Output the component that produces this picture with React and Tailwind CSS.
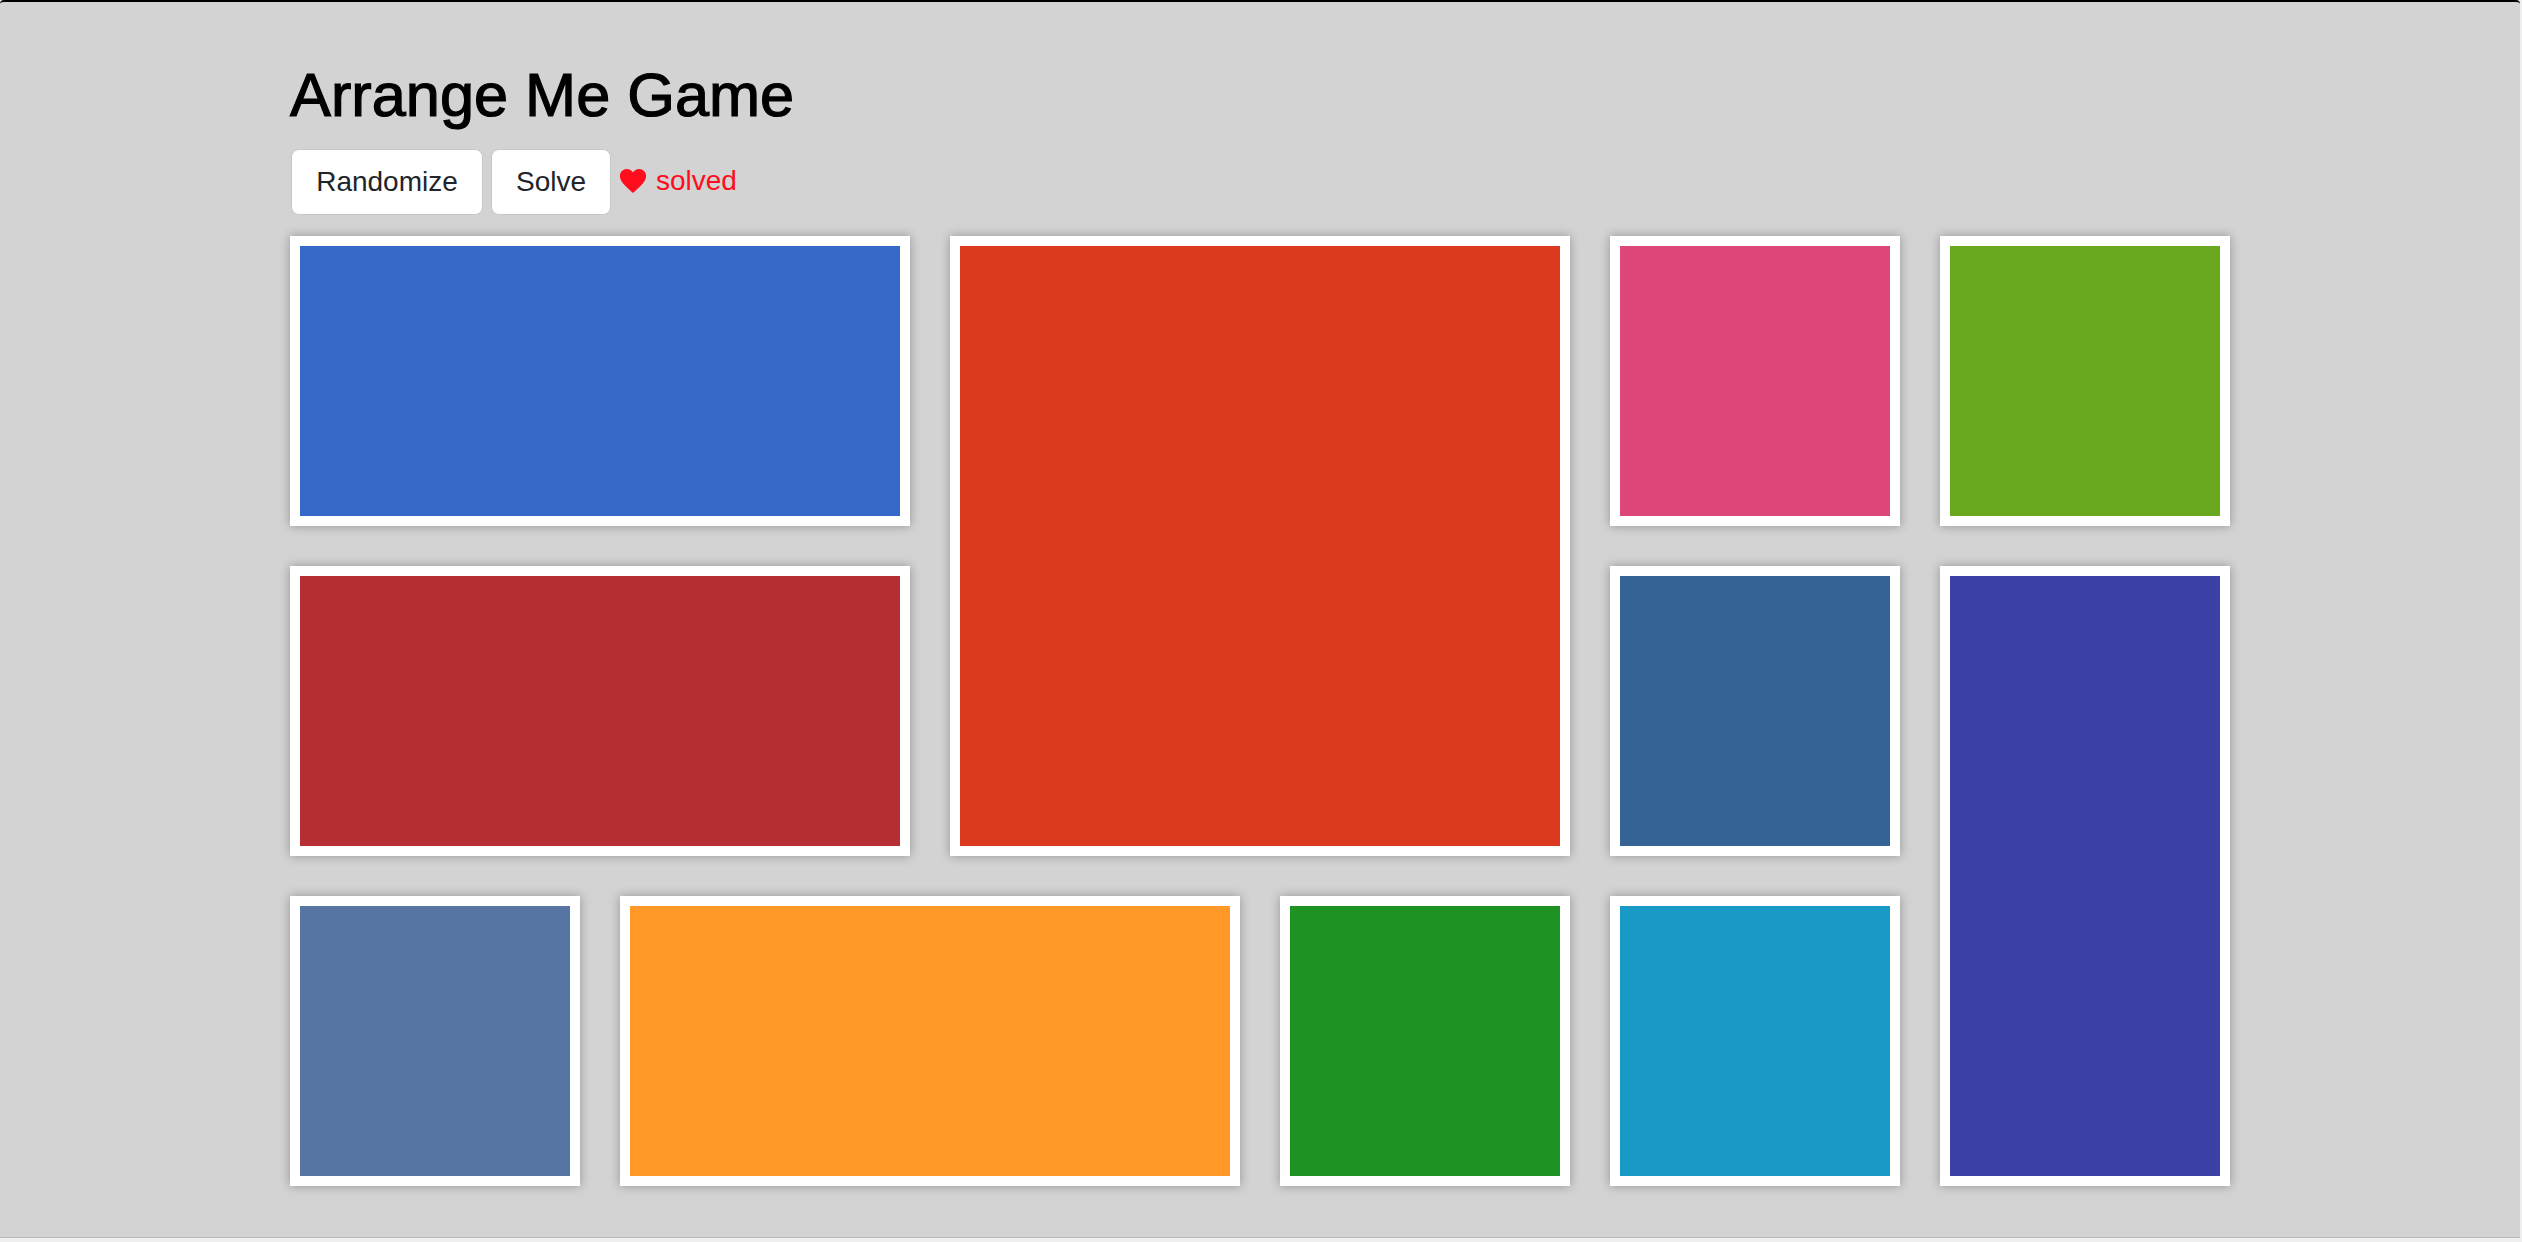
const tiles = [
  { color: 'bg-[#3669c9]', span: 'col-span-2' },
  { color: 'bg-[#dc3a1f]', span: 'col-span-2 row-span-2' },
  { color: 'bg-[#dc4678]', span: '' },
  { color: 'bg-[#6aa81f]', span: '' },
  { color: 'bg-[#b52e33]', span: 'col-span-2' },
  { color: 'bg-[#346495]', span: '' },
  { color: 'bg-[#3c41a7]', span: 'row-span-2' },
  { color: 'bg-[#5675a3]', span: '' },
  { color: 'bg-[#ff9826]', span: 'col-span-2' },
  { color: 'bg-[#1f9224]', span: '' },
  { color: 'bg-[#199ac6]', span: '' },
];

const Tile = ({ color, span }) => (
  <div className={`border-[10px] border-white shadow-[0_0_10px_rgba(0,0,0,0.3)] ${color} ${span}`} />
);

const Button = ({ label, width }) => (
  <button className={`h-[66px] ${width} bg-white rounded-[8px] border border-[#c8c8c8] text-[#212529] text-[28px]`}>
    {label}
  </button>
);

const Heart = () => (
  <svg viewBox="0 0 24 22" className="w-[28px] h-[24px] fill-[#ff0d1d]">
    <path d="M12 22C4 15 0 11 0 6.500C0 2.700 2.900 0 6.300 0C8.700 0 10.800 1.200 12 3.200C13.200 1.200 15.300 0 17.700 0C21.100 0 24 2.700 24 6.500C24 11 20 15 12 22Z" />
  </svg>
);

export default function App() {
  return (
    <div className="h-[1242px] bg-[#f0f0f0] font-['Liberation_Sans',sans-serif]">
      <div className="h-[1238px] mr-[2px] bg-[#d3d3d3] border-t-2 border-black border-b border-b-[#bbb] rounded-t-[4px] pl-[290px]">
        <h1 className="pt-[58px] text-[61.3px] leading-[70px] h-[134px] text-black [-webkit-text-stroke:1.2px_black]">Arrange Me Game</h1>
        <div className="flex items-center gap-2 ml-[1px] h-[66px] mt-[13px]">
          <Button label="Randomize" width="w-[192px]" />
          <Button label="Solve" width="w-[120px]" />
          <div className="flex items-center gap-[9px] pb-[3px] text-[#ff0d1d] text-[28px]">
            <Heart />
            <span>solved</span>
          </div>
        </div>
        <div className="grid grid-cols-[repeat(6,290px)] auto-rows-[290px] gap-10 mt-[21px]">
          {tiles.map((t, i) => (
            <Tile key={i} color={t.color} span={t.span} />
          ))}
        </div>
      </div>
    </div>
  );
}
